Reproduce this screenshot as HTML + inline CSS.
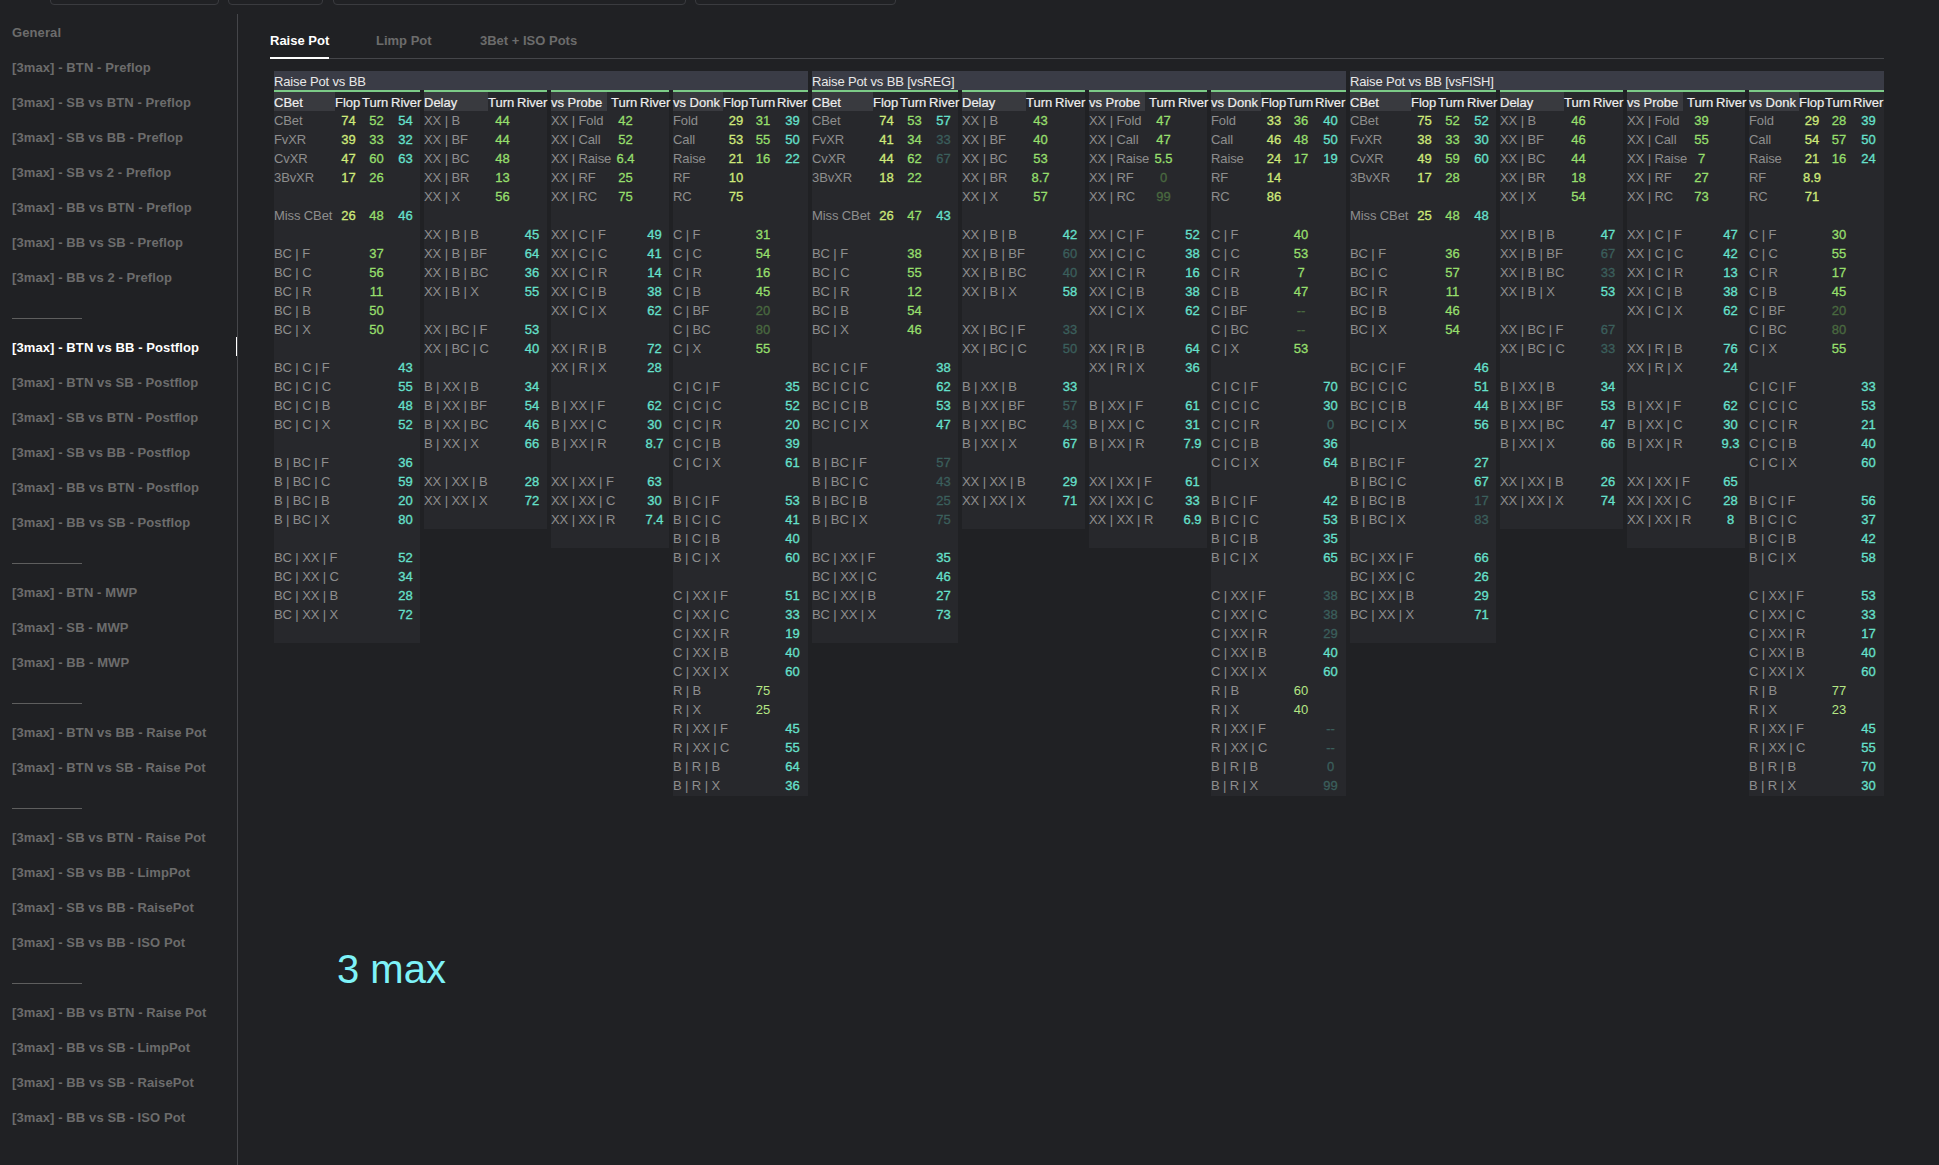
<!DOCTYPE html>
<html><head><meta charset="utf-8"><style>
html,body{margin:0;padding:0;background:#202124;width:1939px;height:1165px;overflow:hidden;}
body{position:relative;font-family:"Liberation Sans",sans-serif;}
.b{position:absolute;}
.x{position:absolute;white-space:nowrap;height:19px;line-height:19px;font-size:13px;}
.ti{color:#e8e8e8;font-size:13px;letter-spacing:-0.15px;}
.hd{color:#eeeeee;font-weight:normal;font-size:13px;letter-spacing:0px;-webkit-text-stroke:0.2px currentColor;}
.ch{text-align:left;}
.lb{color:#8e8e8e;font-size:13px;letter-spacing:-0.1px;}
.n{text-align:center;font-size:13px;font-weight:normal;-webkit-text-stroke:0.3px currentColor;}
.cf{color:#cfe97a;} .cy{color:#b4e684;-webkit-text-stroke:0;} .ct{color:#96df6c;} .cr{color:#66e0cc;}
.df{color:#5a6a3a;} .dt{color:#4a6a40;} .dr{color:#3b5f5c;}
.sd{color:#6c6c6c;font-weight:bold;font-size:13px;letter-spacing:0.1px;}
.act{color:#ffffff;}
.tab{font-weight:bold;font-size:13px;color:#6c6c6c;}
.tab.on{color:#ffffff;}
</style></head><body>
<div class="b" style="left:50px;top:-20px;width:167px;height:23px;border:1px solid #3a3b3f;border-radius:4px"></div><div class="b" style="left:228px;top:-20px;width:93px;height:23px;border:1px solid #3a3b3f;border-radius:4px"></div><div class="b" style="left:333px;top:-20px;width:351px;height:23px;border:1px solid #3a3b3f;border-radius:4px"></div><div class="b" style="left:695px;top:-20px;width:199px;height:23px;border:1px solid #3a3b3f;border-radius:4px"></div>
<div class="x sd" style="left:12px;top:23px">General</div><div class="x sd" style="left:12px;top:58px">[3max] - BTN - Preflop</div><div class="x sd" style="left:12px;top:93px">[3max] - SB vs BTN - Preflop</div><div class="x sd" style="left:12px;top:128px">[3max] - SB vs BB - Preflop</div><div class="x sd" style="left:12px;top:163px">[3max] - SB vs 2 - Preflop</div><div class="x sd" style="left:12px;top:198px">[3max] - BB vs BTN - Preflop</div><div class="x sd" style="left:12px;top:233px">[3max] - BB vs SB - Preflop</div><div class="x sd" style="left:12px;top:268px">[3max] - BB vs 2 - Preflop</div><div class="b" style="left:12px;top:318px;width:70px;height:1px;background:#5e5e5e"></div><div class="x sd act" style="left:12px;top:338px">[3max] - BTN vs BB - Postflop</div><div class="x sd" style="left:12px;top:373px">[3max] - BTN vs SB - Postflop</div><div class="x sd" style="left:12px;top:408px">[3max] - SB vs BTN - Postflop</div><div class="x sd" style="left:12px;top:443px">[3max] - SB vs BB - Postflop</div><div class="x sd" style="left:12px;top:478px">[3max] - BB vs BTN - Postflop</div><div class="x sd" style="left:12px;top:513px">[3max] - BB vs SB - Postflop</div><div class="b" style="left:12px;top:563px;width:70px;height:1px;background:#5e5e5e"></div><div class="x sd" style="left:12px;top:583px">[3max] - BTN - MWP</div><div class="x sd" style="left:12px;top:618px">[3max] - SB - MWP</div><div class="x sd" style="left:12px;top:653px">[3max] - BB - MWP</div><div class="b" style="left:12px;top:703px;width:70px;height:1px;background:#5e5e5e"></div><div class="x sd" style="left:12px;top:723px">[3max] - BTN vs BB - Raise Pot</div><div class="x sd" style="left:12px;top:758px">[3max] - BTN vs SB - Raise Pot</div><div class="b" style="left:12px;top:808px;width:70px;height:1px;background:#5e5e5e"></div><div class="x sd" style="left:12px;top:828px">[3max] - SB vs BTN - Raise Pot</div><div class="x sd" style="left:12px;top:863px">[3max] - SB vs BB - LimpPot</div><div class="x sd" style="left:12px;top:898px">[3max] - SB vs BB - RaisePot</div><div class="x sd" style="left:12px;top:933px">[3max] - SB vs BB - ISO Pot</div><div class="b" style="left:12px;top:983px;width:70px;height:1px;background:#5e5e5e"></div><div class="x sd" style="left:12px;top:1003px">[3max] - BB vs BTN - Raise Pot</div><div class="x sd" style="left:12px;top:1038px">[3max] - BB vs SB - LimpPot</div><div class="x sd" style="left:12px;top:1073px">[3max] - BB vs SB - RaisePot</div><div class="x sd" style="left:12px;top:1108px">[3max] - BB vs SB - ISO Pot</div>
<div class="b" style="left:237px;top:14px;width:1px;height:1151px;background:#45464a"></div><div class="b" style="left:236px;top:337px;width:1px;height:19px;background:#ffffff"></div><div class="x" style="left:337px;top:949px;height:40px;line-height:40px;font-size:40px;color:#7ef2f8">3 max</div>
<div class="x tab on" style="left:270px;top:31px">Raise Pot</div><div class="x tab" style="left:376px;top:31px">Limp Pot</div><div class="x tab" style="left:480px;top:31px">3Bet + ISO Pots</div><div class="b" style="left:270px;top:58px;width:1614px;height:1px;background:#45464a"></div><div class="b" style="left:270px;top:57px;width:59px;height:2px;background:#ffffff"></div>
<div class="b" style="left:274px;top:71px;width:534px;height:19px;background:#3a3c46;"></div><div class="x ti" style="left:274px;top:72px;">Raise Pot vs BB</div><div class="b" style="left:274px;top:92px;width:146px;height:551px;background:#27282c;"></div><div class="b" style="left:274px;top:90px;width:146px;height:2px;background:#7ccb87;"></div><div class="b" style="left:274px;top:92px;width:61px;height:19px;background:#393a3f;"></div><div class="x hd" style="left:274px;top:93px;">CBet</div><div class="x hd ch" style="left:335px;top:93px;width:27px;">Flop</div><div class="x hd ch" style="left:362px;top:93px;width:29px;">Turn</div><div class="x hd ch" style="left:391px;top:93px;width:29px;">River</div><div class="x lb" style="left:274px;top:111.25px;">CBet</div><div class="x n cf" style="left:335px;top:111.25px;width:27px;">74</div><div class="x n ct" style="left:362px;top:111.25px;width:29px;">52</div><div class="x n cr" style="left:391px;top:111.25px;width:29px;">54</div><div class="x lb" style="left:274px;top:130.25px;">FvXR</div><div class="x n cf" style="left:335px;top:130.25px;width:27px;">39</div><div class="x n ct" style="left:362px;top:130.25px;width:29px;">33</div><div class="x n cr" style="left:391px;top:130.25px;width:29px;">32</div><div class="x lb" style="left:274px;top:149.25px;">CvXR</div><div class="x n cf" style="left:335px;top:149.25px;width:27px;">47</div><div class="x n ct" style="left:362px;top:149.25px;width:29px;">60</div><div class="x n cr" style="left:391px;top:149.25px;width:29px;">63</div><div class="x lb" style="left:274px;top:168.25px;">3BvXR</div><div class="x n cf" style="left:335px;top:168.25px;width:27px;">17</div><div class="x n ct" style="left:362px;top:168.25px;width:29px;">26</div><div class="x lb" style="left:274px;top:206.25px;">Miss CBet</div><div class="x n cf" style="left:335px;top:206.25px;width:27px;">26</div><div class="x n ct" style="left:362px;top:206.25px;width:29px;">48</div><div class="x n cr" style="left:391px;top:206.25px;width:29px;">46</div><div class="x lb" style="left:274px;top:244.25px;">BC | F</div><div class="x n ct" style="left:362px;top:244.25px;width:29px;">37</div><div class="x lb" style="left:274px;top:263.25px;">BC | C</div><div class="x n ct" style="left:362px;top:263.25px;width:29px;">56</div><div class="x lb" style="left:274px;top:282.25px;">BC | R</div><div class="x n ct" style="left:362px;top:282.25px;width:29px;">11</div><div class="x lb" style="left:274px;top:301.25px;">BC | B</div><div class="x n ct" style="left:362px;top:301.25px;width:29px;">50</div><div class="x lb" style="left:274px;top:320.25px;">BC | X</div><div class="x n ct" style="left:362px;top:320.25px;width:29px;">50</div><div class="x lb" style="left:274px;top:358.25px;">BC | C | F</div><div class="x n cr" style="left:391px;top:358.25px;width:29px;">43</div><div class="x lb" style="left:274px;top:377.25px;">BC | C | C</div><div class="x n cr" style="left:391px;top:377.25px;width:29px;">55</div><div class="x lb" style="left:274px;top:396.25px;">BC | C | B</div><div class="x n cr" style="left:391px;top:396.25px;width:29px;">48</div><div class="x lb" style="left:274px;top:415.25px;">BC | C | X</div><div class="x n cr" style="left:391px;top:415.25px;width:29px;">52</div><div class="x lb" style="left:274px;top:453.25px;">B | BC | F</div><div class="x n cr" style="left:391px;top:453.25px;width:29px;">36</div><div class="x lb" style="left:274px;top:472.25px;">B | BC | C</div><div class="x n cr" style="left:391px;top:472.25px;width:29px;">59</div><div class="x lb" style="left:274px;top:491.25px;">B | BC | B</div><div class="x n cr" style="left:391px;top:491.25px;width:29px;">20</div><div class="x lb" style="left:274px;top:510.25px;">B | BC | X</div><div class="x n cr" style="left:391px;top:510.25px;width:29px;">80</div><div class="x lb" style="left:274px;top:548.25px;">BC | XX | F</div><div class="x n cr" style="left:391px;top:548.25px;width:29px;">52</div><div class="x lb" style="left:274px;top:567.25px;">BC | XX | C</div><div class="x n cr" style="left:391px;top:567.25px;width:29px;">34</div><div class="x lb" style="left:274px;top:586.25px;">BC | XX | B</div><div class="x n cr" style="left:391px;top:586.25px;width:29px;">28</div><div class="x lb" style="left:274px;top:605.25px;">BC | XX | X</div><div class="x n cr" style="left:391px;top:605.25px;width:29px;">72</div><div class="b" style="left:424px;top:92px;width:123px;height:437px;background:#27282c;"></div><div class="b" style="left:424px;top:90px;width:123px;height:2px;background:#7ccb87;"></div><div class="b" style="left:424px;top:92px;width:64px;height:19px;background:#393a3f;"></div><div class="x hd" style="left:424px;top:93px;">Delay</div><div class="x hd ch" style="left:488px;top:93px;width:29px;">Turn</div><div class="x hd ch" style="left:517px;top:93px;width:30px;">River</div><div class="x lb" style="left:424px;top:111.25px;">XX | B</div><div class="x n ct" style="left:488px;top:111.25px;width:29px;">44</div><div class="x lb" style="left:424px;top:130.25px;">XX | BF</div><div class="x n ct" style="left:488px;top:130.25px;width:29px;">44</div><div class="x lb" style="left:424px;top:149.25px;">XX | BC</div><div class="x n ct" style="left:488px;top:149.25px;width:29px;">48</div><div class="x lb" style="left:424px;top:168.25px;">XX | BR</div><div class="x n ct" style="left:488px;top:168.25px;width:29px;">13</div><div class="x lb" style="left:424px;top:187.25px;">XX | X</div><div class="x n ct" style="left:488px;top:187.25px;width:29px;">56</div><div class="x lb" style="left:424px;top:225.25px;">XX | B | B</div><div class="x n cr" style="left:517px;top:225.25px;width:30px;">45</div><div class="x lb" style="left:424px;top:244.25px;">XX | B | BF</div><div class="x n cr" style="left:517px;top:244.25px;width:30px;">64</div><div class="x lb" style="left:424px;top:263.25px;">XX | B | BC</div><div class="x n cr" style="left:517px;top:263.25px;width:30px;">36</div><div class="x lb" style="left:424px;top:282.25px;">XX | B | X</div><div class="x n cr" style="left:517px;top:282.25px;width:30px;">55</div><div class="x lb" style="left:424px;top:320.25px;">XX | BC | F</div><div class="x n cr" style="left:517px;top:320.25px;width:30px;">53</div><div class="x lb" style="left:424px;top:339.25px;">XX | BC | C</div><div class="x n cr" style="left:517px;top:339.25px;width:30px;">40</div><div class="x lb" style="left:424px;top:377.25px;">B | XX | B</div><div class="x n cr" style="left:517px;top:377.25px;width:30px;">34</div><div class="x lb" style="left:424px;top:396.25px;">B | XX | BF</div><div class="x n cr" style="left:517px;top:396.25px;width:30px;">54</div><div class="x lb" style="left:424px;top:415.25px;">B | XX | BC</div><div class="x n cr" style="left:517px;top:415.25px;width:30px;">46</div><div class="x lb" style="left:424px;top:434.25px;">B | XX | X</div><div class="x n cr" style="left:517px;top:434.25px;width:30px;">66</div><div class="x lb" style="left:424px;top:472.25px;">XX | XX | B</div><div class="x n cr" style="left:517px;top:472.25px;width:30px;">28</div><div class="x lb" style="left:424px;top:491.25px;">XX | XX | X</div><div class="x n cr" style="left:517px;top:491.25px;width:30px;">72</div><div class="b" style="left:551px;top:92px;width:118px;height:456px;background:#27282c;"></div><div class="b" style="left:551px;top:90px;width:118px;height:2px;background:#7ccb87;"></div><div class="b" style="left:551px;top:92px;width:56px;height:19px;background:#393a3f;"></div><div class="x hd" style="left:551px;top:93px;">vs Probe</div><div class="x hd ch" style="left:611px;top:93px;width:29px;">Turn</div><div class="x hd ch" style="left:640px;top:93px;width:29px;">River</div><div class="x lb" style="left:551px;top:111.25px;">XX | Fold</div><div class="x n ct" style="left:611px;top:111.25px;width:29px;">42</div><div class="x lb" style="left:551px;top:130.25px;">XX | Call</div><div class="x n ct" style="left:611px;top:130.25px;width:29px;">52</div><div class="x lb" style="left:551px;top:149.25px;">XX | Raise</div><div class="x n ct" style="left:611px;top:149.25px;width:29px;">6.4</div><div class="x lb" style="left:551px;top:168.25px;">XX | RF</div><div class="x n ct" style="left:611px;top:168.25px;width:29px;">25</div><div class="x lb" style="left:551px;top:187.25px;">XX | RC</div><div class="x n ct" style="left:611px;top:187.25px;width:29px;">75</div><div class="x lb" style="left:551px;top:225.25px;">XX | C | F</div><div class="x n cr" style="left:640px;top:225.25px;width:29px;">49</div><div class="x lb" style="left:551px;top:244.25px;">XX | C | C</div><div class="x n cr" style="left:640px;top:244.25px;width:29px;">41</div><div class="x lb" style="left:551px;top:263.25px;">XX | C | R</div><div class="x n cr" style="left:640px;top:263.25px;width:29px;">14</div><div class="x lb" style="left:551px;top:282.25px;">XX | C | B</div><div class="x n cr" style="left:640px;top:282.25px;width:29px;">38</div><div class="x lb" style="left:551px;top:301.25px;">XX | C | X</div><div class="x n cr" style="left:640px;top:301.25px;width:29px;">62</div><div class="x lb" style="left:551px;top:339.25px;">XX | R | B</div><div class="x n cr" style="left:640px;top:339.25px;width:29px;">72</div><div class="x lb" style="left:551px;top:358.25px;">XX | R | X</div><div class="x n cr" style="left:640px;top:358.25px;width:29px;">28</div><div class="x lb" style="left:551px;top:396.25px;">B | XX | F</div><div class="x n cr" style="left:640px;top:396.25px;width:29px;">62</div><div class="x lb" style="left:551px;top:415.25px;">B | XX | C</div><div class="x n cr" style="left:640px;top:415.25px;width:29px;">30</div><div class="x lb" style="left:551px;top:434.25px;">B | XX | R</div><div class="x n cr" style="left:640px;top:434.25px;width:29px;">8.7</div><div class="x lb" style="left:551px;top:472.25px;">XX | XX | F</div><div class="x n cr" style="left:640px;top:472.25px;width:29px;">63</div><div class="x lb" style="left:551px;top:491.25px;">XX | XX | C</div><div class="x n cr" style="left:640px;top:491.25px;width:29px;">30</div><div class="x lb" style="left:551px;top:510.25px;">XX | XX | R</div><div class="x n cr" style="left:640px;top:510.25px;width:29px;">7.4</div><div class="b" style="left:673px;top:92px;width:135px;height:704px;background:#27282c;"></div><div class="b" style="left:673px;top:90px;width:135px;height:2px;background:#7ccb87;"></div><div class="b" style="left:673px;top:92px;width:50px;height:19px;background:#393a3f;"></div><div class="x hd" style="left:673px;top:93px;">vs Donk</div><div class="x hd ch" style="left:723px;top:93px;width:26px;">Flop</div><div class="x hd ch" style="left:749px;top:93px;width:28px;">Turn</div><div class="x hd ch" style="left:777px;top:93px;width:31px;">River</div><div class="x lb" style="left:673px;top:111.25px;">Fold</div><div class="x n cf" style="left:723px;top:111.25px;width:26px;">29</div><div class="x n ct" style="left:749px;top:111.25px;width:28px;">31</div><div class="x n cr" style="left:777px;top:111.25px;width:31px;">39</div><div class="x lb" style="left:673px;top:130.25px;">Call</div><div class="x n cf" style="left:723px;top:130.25px;width:26px;">53</div><div class="x n ct" style="left:749px;top:130.25px;width:28px;">55</div><div class="x n cr" style="left:777px;top:130.25px;width:31px;">50</div><div class="x lb" style="left:673px;top:149.25px;">Raise</div><div class="x n cf" style="left:723px;top:149.25px;width:26px;">21</div><div class="x n ct" style="left:749px;top:149.25px;width:28px;">16</div><div class="x n cr" style="left:777px;top:149.25px;width:31px;">22</div><div class="x lb" style="left:673px;top:168.25px;">RF</div><div class="x n cf" style="left:723px;top:168.25px;width:26px;">10</div><div class="x lb" style="left:673px;top:187.25px;">RC</div><div class="x n cf" style="left:723px;top:187.25px;width:26px;">75</div><div class="x lb" style="left:673px;top:225.25px;">C | F</div><div class="x n ct" style="left:749px;top:225.25px;width:28px;">31</div><div class="x lb" style="left:673px;top:244.25px;">C | C</div><div class="x n ct" style="left:749px;top:244.25px;width:28px;">54</div><div class="x lb" style="left:673px;top:263.25px;">C | R</div><div class="x n ct" style="left:749px;top:263.25px;width:28px;">16</div><div class="x lb" style="left:673px;top:282.25px;">C | B</div><div class="x n ct" style="left:749px;top:282.25px;width:28px;">45</div><div class="x lb" style="left:673px;top:301.25px;">C | BF</div><div class="x n dt" style="left:749px;top:301.25px;width:28px;">20</div><div class="x lb" style="left:673px;top:320.25px;">C | BC</div><div class="x n dt" style="left:749px;top:320.25px;width:28px;">80</div><div class="x lb" style="left:673px;top:339.25px;">C | X</div><div class="x n ct" style="left:749px;top:339.25px;width:28px;">55</div><div class="x lb" style="left:673px;top:377.25px;">C | C | F</div><div class="x n cr" style="left:777px;top:377.25px;width:31px;">35</div><div class="x lb" style="left:673px;top:396.25px;">C | C | C</div><div class="x n cr" style="left:777px;top:396.25px;width:31px;">52</div><div class="x lb" style="left:673px;top:415.25px;">C | C | R</div><div class="x n cr" style="left:777px;top:415.25px;width:31px;">20</div><div class="x lb" style="left:673px;top:434.25px;">C | C | B</div><div class="x n cr" style="left:777px;top:434.25px;width:31px;">39</div><div class="x lb" style="left:673px;top:453.25px;">C | C | X</div><div class="x n cr" style="left:777px;top:453.25px;width:31px;">61</div><div class="x lb" style="left:673px;top:491.25px;">B | C | F</div><div class="x n cr" style="left:777px;top:491.25px;width:31px;">53</div><div class="x lb" style="left:673px;top:510.25px;">B | C | C</div><div class="x n cr" style="left:777px;top:510.25px;width:31px;">41</div><div class="x lb" style="left:673px;top:529.25px;">B | C | B</div><div class="x n cr" style="left:777px;top:529.25px;width:31px;">40</div><div class="x lb" style="left:673px;top:548.25px;">B | C | X</div><div class="x n cr" style="left:777px;top:548.25px;width:31px;">60</div><div class="x lb" style="left:673px;top:586.25px;">C | XX | F</div><div class="x n cr" style="left:777px;top:586.25px;width:31px;">51</div><div class="x lb" style="left:673px;top:605.25px;">C | XX | C</div><div class="x n cr" style="left:777px;top:605.25px;width:31px;">33</div><div class="x lb" style="left:673px;top:624.25px;">C | XX | R</div><div class="x n cr" style="left:777px;top:624.25px;width:31px;">19</div><div class="x lb" style="left:673px;top:643.25px;">C | XX | B</div><div class="x n cr" style="left:777px;top:643.25px;width:31px;">40</div><div class="x lb" style="left:673px;top:662.25px;">C | XX | X</div><div class="x n cr" style="left:777px;top:662.25px;width:31px;">60</div><div class="x lb" style="left:673px;top:681.25px;">R | B</div><div class="x n cy" style="left:749px;top:681.25px;width:28px;">75</div><div class="x lb" style="left:673px;top:700.25px;">R | X</div><div class="x n cy" style="left:749px;top:700.25px;width:28px;">25</div><div class="x lb" style="left:673px;top:719.25px;">R | XX | F</div><div class="x n cr" style="left:777px;top:719.25px;width:31px;">45</div><div class="x lb" style="left:673px;top:738.25px;">R | XX | C</div><div class="x n cr" style="left:777px;top:738.25px;width:31px;">55</div><div class="x lb" style="left:673px;top:757.25px;">B | R | B</div><div class="x n cr" style="left:777px;top:757.25px;width:31px;">64</div><div class="x lb" style="left:673px;top:776.25px;">B | R | X</div><div class="x n cr" style="left:777px;top:776.25px;width:31px;">36</div><div class="b" style="left:812px;top:71px;width:534px;height:19px;background:#3a3c46;"></div><div class="x ti" style="left:812px;top:72px;">Raise Pot vs BB [vsREG]</div><div class="b" style="left:812px;top:92px;width:146px;height:551px;background:#27282c;"></div><div class="b" style="left:812px;top:90px;width:146px;height:2px;background:#7ccb87;"></div><div class="b" style="left:812px;top:92px;width:61px;height:19px;background:#393a3f;"></div><div class="x hd" style="left:812px;top:93px;">CBet</div><div class="x hd ch" style="left:873px;top:93px;width:27px;">Flop</div><div class="x hd ch" style="left:900px;top:93px;width:29px;">Turn</div><div class="x hd ch" style="left:929px;top:93px;width:29px;">River</div><div class="x lb" style="left:812px;top:111.25px;">CBet</div><div class="x n cf" style="left:873px;top:111.25px;width:27px;">74</div><div class="x n ct" style="left:900px;top:111.25px;width:29px;">53</div><div class="x n cr" style="left:929px;top:111.25px;width:29px;">57</div><div class="x lb" style="left:812px;top:130.25px;">FvXR</div><div class="x n cf" style="left:873px;top:130.25px;width:27px;">41</div><div class="x n ct" style="left:900px;top:130.25px;width:29px;">34</div><div class="x n dr" style="left:929px;top:130.25px;width:29px;">33</div><div class="x lb" style="left:812px;top:149.25px;">CvXR</div><div class="x n cf" style="left:873px;top:149.25px;width:27px;">44</div><div class="x n ct" style="left:900px;top:149.25px;width:29px;">62</div><div class="x n dr" style="left:929px;top:149.25px;width:29px;">67</div><div class="x lb" style="left:812px;top:168.25px;">3BvXR</div><div class="x n cf" style="left:873px;top:168.25px;width:27px;">18</div><div class="x n ct" style="left:900px;top:168.25px;width:29px;">22</div><div class="x lb" style="left:812px;top:206.25px;">Miss CBet</div><div class="x n cf" style="left:873px;top:206.25px;width:27px;">26</div><div class="x n ct" style="left:900px;top:206.25px;width:29px;">47</div><div class="x n cr" style="left:929px;top:206.25px;width:29px;">43</div><div class="x lb" style="left:812px;top:244.25px;">BC | F</div><div class="x n ct" style="left:900px;top:244.25px;width:29px;">38</div><div class="x lb" style="left:812px;top:263.25px;">BC | C</div><div class="x n ct" style="left:900px;top:263.25px;width:29px;">55</div><div class="x lb" style="left:812px;top:282.25px;">BC | R</div><div class="x n ct" style="left:900px;top:282.25px;width:29px;">12</div><div class="x lb" style="left:812px;top:301.25px;">BC | B</div><div class="x n ct" style="left:900px;top:301.25px;width:29px;">54</div><div class="x lb" style="left:812px;top:320.25px;">BC | X</div><div class="x n ct" style="left:900px;top:320.25px;width:29px;">46</div><div class="x lb" style="left:812px;top:358.25px;">BC | C | F</div><div class="x n cr" style="left:929px;top:358.25px;width:29px;">38</div><div class="x lb" style="left:812px;top:377.25px;">BC | C | C</div><div class="x n cr" style="left:929px;top:377.25px;width:29px;">62</div><div class="x lb" style="left:812px;top:396.25px;">BC | C | B</div><div class="x n cr" style="left:929px;top:396.25px;width:29px;">53</div><div class="x lb" style="left:812px;top:415.25px;">BC | C | X</div><div class="x n cr" style="left:929px;top:415.25px;width:29px;">47</div><div class="x lb" style="left:812px;top:453.25px;">B | BC | F</div><div class="x n dr" style="left:929px;top:453.25px;width:29px;">57</div><div class="x lb" style="left:812px;top:472.25px;">B | BC | C</div><div class="x n dr" style="left:929px;top:472.25px;width:29px;">43</div><div class="x lb" style="left:812px;top:491.25px;">B | BC | B</div><div class="x n dr" style="left:929px;top:491.25px;width:29px;">25</div><div class="x lb" style="left:812px;top:510.25px;">B | BC | X</div><div class="x n dr" style="left:929px;top:510.25px;width:29px;">75</div><div class="x lb" style="left:812px;top:548.25px;">BC | XX | F</div><div class="x n cr" style="left:929px;top:548.25px;width:29px;">35</div><div class="x lb" style="left:812px;top:567.25px;">BC | XX | C</div><div class="x n cr" style="left:929px;top:567.25px;width:29px;">46</div><div class="x lb" style="left:812px;top:586.25px;">BC | XX | B</div><div class="x n cr" style="left:929px;top:586.25px;width:29px;">27</div><div class="x lb" style="left:812px;top:605.25px;">BC | XX | X</div><div class="x n cr" style="left:929px;top:605.25px;width:29px;">73</div><div class="b" style="left:962px;top:92px;width:123px;height:437px;background:#27282c;"></div><div class="b" style="left:962px;top:90px;width:123px;height:2px;background:#7ccb87;"></div><div class="b" style="left:962px;top:92px;width:64px;height:19px;background:#393a3f;"></div><div class="x hd" style="left:962px;top:93px;">Delay</div><div class="x hd ch" style="left:1026px;top:93px;width:29px;">Turn</div><div class="x hd ch" style="left:1055px;top:93px;width:30px;">River</div><div class="x lb" style="left:962px;top:111.25px;">XX | B</div><div class="x n ct" style="left:1026px;top:111.25px;width:29px;">43</div><div class="x lb" style="left:962px;top:130.25px;">XX | BF</div><div class="x n ct" style="left:1026px;top:130.25px;width:29px;">40</div><div class="x lb" style="left:962px;top:149.25px;">XX | BC</div><div class="x n ct" style="left:1026px;top:149.25px;width:29px;">53</div><div class="x lb" style="left:962px;top:168.25px;">XX | BR</div><div class="x n ct" style="left:1026px;top:168.25px;width:29px;">8.7</div><div class="x lb" style="left:962px;top:187.25px;">XX | X</div><div class="x n ct" style="left:1026px;top:187.25px;width:29px;">57</div><div class="x lb" style="left:962px;top:225.25px;">XX | B | B</div><div class="x n cr" style="left:1055px;top:225.25px;width:30px;">42</div><div class="x lb" style="left:962px;top:244.25px;">XX | B | BF</div><div class="x n dr" style="left:1055px;top:244.25px;width:30px;">60</div><div class="x lb" style="left:962px;top:263.25px;">XX | B | BC</div><div class="x n dr" style="left:1055px;top:263.25px;width:30px;">40</div><div class="x lb" style="left:962px;top:282.25px;">XX | B | X</div><div class="x n cr" style="left:1055px;top:282.25px;width:30px;">58</div><div class="x lb" style="left:962px;top:320.25px;">XX | BC | F</div><div class="x n dr" style="left:1055px;top:320.25px;width:30px;">33</div><div class="x lb" style="left:962px;top:339.25px;">XX | BC | C</div><div class="x n dr" style="left:1055px;top:339.25px;width:30px;">50</div><div class="x lb" style="left:962px;top:377.25px;">B | XX | B</div><div class="x n cr" style="left:1055px;top:377.25px;width:30px;">33</div><div class="x lb" style="left:962px;top:396.25px;">B | XX | BF</div><div class="x n dr" style="left:1055px;top:396.25px;width:30px;">57</div><div class="x lb" style="left:962px;top:415.25px;">B | XX | BC</div><div class="x n dr" style="left:1055px;top:415.25px;width:30px;">43</div><div class="x lb" style="left:962px;top:434.25px;">B | XX | X</div><div class="x n cr" style="left:1055px;top:434.25px;width:30px;">67</div><div class="x lb" style="left:962px;top:472.25px;">XX | XX | B</div><div class="x n cr" style="left:1055px;top:472.25px;width:30px;">29</div><div class="x lb" style="left:962px;top:491.25px;">XX | XX | X</div><div class="x n cr" style="left:1055px;top:491.25px;width:30px;">71</div><div class="b" style="left:1089px;top:92px;width:118px;height:456px;background:#27282c;"></div><div class="b" style="left:1089px;top:90px;width:118px;height:2px;background:#7ccb87;"></div><div class="b" style="left:1089px;top:92px;width:56px;height:19px;background:#393a3f;"></div><div class="x hd" style="left:1089px;top:93px;">vs Probe</div><div class="x hd ch" style="left:1149px;top:93px;width:29px;">Turn</div><div class="x hd ch" style="left:1178px;top:93px;width:29px;">River</div><div class="x lb" style="left:1089px;top:111.25px;">XX | Fold</div><div class="x n ct" style="left:1149px;top:111.25px;width:29px;">47</div><div class="x lb" style="left:1089px;top:130.25px;">XX | Call</div><div class="x n ct" style="left:1149px;top:130.25px;width:29px;">47</div><div class="x lb" style="left:1089px;top:149.25px;">XX | Raise</div><div class="x n ct" style="left:1149px;top:149.25px;width:29px;">5.5</div><div class="x lb" style="left:1089px;top:168.25px;">XX | RF</div><div class="x n dt" style="left:1149px;top:168.25px;width:29px;">0</div><div class="x lb" style="left:1089px;top:187.25px;">XX | RC</div><div class="x n dt" style="left:1149px;top:187.25px;width:29px;">99</div><div class="x lb" style="left:1089px;top:225.25px;">XX | C | F</div><div class="x n cr" style="left:1178px;top:225.25px;width:29px;">52</div><div class="x lb" style="left:1089px;top:244.25px;">XX | C | C</div><div class="x n cr" style="left:1178px;top:244.25px;width:29px;">38</div><div class="x lb" style="left:1089px;top:263.25px;">XX | C | R</div><div class="x n cr" style="left:1178px;top:263.25px;width:29px;">16</div><div class="x lb" style="left:1089px;top:282.25px;">XX | C | B</div><div class="x n cr" style="left:1178px;top:282.25px;width:29px;">38</div><div class="x lb" style="left:1089px;top:301.25px;">XX | C | X</div><div class="x n cr" style="left:1178px;top:301.25px;width:29px;">62</div><div class="x lb" style="left:1089px;top:339.25px;">XX | R | B</div><div class="x n cr" style="left:1178px;top:339.25px;width:29px;">64</div><div class="x lb" style="left:1089px;top:358.25px;">XX | R | X</div><div class="x n cr" style="left:1178px;top:358.25px;width:29px;">36</div><div class="x lb" style="left:1089px;top:396.25px;">B | XX | F</div><div class="x n cr" style="left:1178px;top:396.25px;width:29px;">61</div><div class="x lb" style="left:1089px;top:415.25px;">B | XX | C</div><div class="x n cr" style="left:1178px;top:415.25px;width:29px;">31</div><div class="x lb" style="left:1089px;top:434.25px;">B | XX | R</div><div class="x n cr" style="left:1178px;top:434.25px;width:29px;">7.9</div><div class="x lb" style="left:1089px;top:472.25px;">XX | XX | F</div><div class="x n cr" style="left:1178px;top:472.25px;width:29px;">61</div><div class="x lb" style="left:1089px;top:491.25px;">XX | XX | C</div><div class="x n cr" style="left:1178px;top:491.25px;width:29px;">33</div><div class="x lb" style="left:1089px;top:510.25px;">XX | XX | R</div><div class="x n cr" style="left:1178px;top:510.25px;width:29px;">6.9</div><div class="b" style="left:1211px;top:92px;width:135px;height:704px;background:#27282c;"></div><div class="b" style="left:1211px;top:90px;width:135px;height:2px;background:#7ccb87;"></div><div class="b" style="left:1211px;top:92px;width:50px;height:19px;background:#393a3f;"></div><div class="x hd" style="left:1211px;top:93px;">vs Donk</div><div class="x hd ch" style="left:1261px;top:93px;width:26px;">Flop</div><div class="x hd ch" style="left:1287px;top:93px;width:28px;">Turn</div><div class="x hd ch" style="left:1315px;top:93px;width:31px;">River</div><div class="x lb" style="left:1211px;top:111.25px;">Fold</div><div class="x n cf" style="left:1261px;top:111.25px;width:26px;">33</div><div class="x n ct" style="left:1287px;top:111.25px;width:28px;">36</div><div class="x n cr" style="left:1315px;top:111.25px;width:31px;">40</div><div class="x lb" style="left:1211px;top:130.25px;">Call</div><div class="x n cf" style="left:1261px;top:130.25px;width:26px;">46</div><div class="x n ct" style="left:1287px;top:130.25px;width:28px;">48</div><div class="x n cr" style="left:1315px;top:130.25px;width:31px;">50</div><div class="x lb" style="left:1211px;top:149.25px;">Raise</div><div class="x n cf" style="left:1261px;top:149.25px;width:26px;">24</div><div class="x n ct" style="left:1287px;top:149.25px;width:28px;">17</div><div class="x n cr" style="left:1315px;top:149.25px;width:31px;">19</div><div class="x lb" style="left:1211px;top:168.25px;">RF</div><div class="x n cf" style="left:1261px;top:168.25px;width:26px;">14</div><div class="x lb" style="left:1211px;top:187.25px;">RC</div><div class="x n cf" style="left:1261px;top:187.25px;width:26px;">86</div><div class="x lb" style="left:1211px;top:225.25px;">C | F</div><div class="x n ct" style="left:1287px;top:225.25px;width:28px;">40</div><div class="x lb" style="left:1211px;top:244.25px;">C | C</div><div class="x n ct" style="left:1287px;top:244.25px;width:28px;">53</div><div class="x lb" style="left:1211px;top:263.25px;">C | R</div><div class="x n ct" style="left:1287px;top:263.25px;width:28px;">7</div><div class="x lb" style="left:1211px;top:282.25px;">C | B</div><div class="x n ct" style="left:1287px;top:282.25px;width:28px;">47</div><div class="x lb" style="left:1211px;top:301.25px;">C | BF</div><div class="x n dt" style="left:1287px;top:301.25px;width:28px;">--</div><div class="x lb" style="left:1211px;top:320.25px;">C | BC</div><div class="x n dt" style="left:1287px;top:320.25px;width:28px;">--</div><div class="x lb" style="left:1211px;top:339.25px;">C | X</div><div class="x n ct" style="left:1287px;top:339.25px;width:28px;">53</div><div class="x lb" style="left:1211px;top:377.25px;">C | C | F</div><div class="x n cr" style="left:1315px;top:377.25px;width:31px;">70</div><div class="x lb" style="left:1211px;top:396.25px;">C | C | C</div><div class="x n cr" style="left:1315px;top:396.25px;width:31px;">30</div><div class="x lb" style="left:1211px;top:415.25px;">C | C | R</div><div class="x n dr" style="left:1315px;top:415.25px;width:31px;">0</div><div class="x lb" style="left:1211px;top:434.25px;">C | C | B</div><div class="x n cr" style="left:1315px;top:434.25px;width:31px;">36</div><div class="x lb" style="left:1211px;top:453.25px;">C | C | X</div><div class="x n cr" style="left:1315px;top:453.25px;width:31px;">64</div><div class="x lb" style="left:1211px;top:491.25px;">B | C | F</div><div class="x n cr" style="left:1315px;top:491.25px;width:31px;">42</div><div class="x lb" style="left:1211px;top:510.25px;">B | C | C</div><div class="x n cr" style="left:1315px;top:510.25px;width:31px;">53</div><div class="x lb" style="left:1211px;top:529.25px;">B | C | B</div><div class="x n cr" style="left:1315px;top:529.25px;width:31px;">35</div><div class="x lb" style="left:1211px;top:548.25px;">B | C | X</div><div class="x n cr" style="left:1315px;top:548.25px;width:31px;">65</div><div class="x lb" style="left:1211px;top:586.25px;">C | XX | F</div><div class="x n dr" style="left:1315px;top:586.25px;width:31px;">38</div><div class="x lb" style="left:1211px;top:605.25px;">C | XX | C</div><div class="x n dr" style="left:1315px;top:605.25px;width:31px;">38</div><div class="x lb" style="left:1211px;top:624.25px;">C | XX | R</div><div class="x n dr" style="left:1315px;top:624.25px;width:31px;">29</div><div class="x lb" style="left:1211px;top:643.25px;">C | XX | B</div><div class="x n cr" style="left:1315px;top:643.25px;width:31px;">40</div><div class="x lb" style="left:1211px;top:662.25px;">C | XX | X</div><div class="x n cr" style="left:1315px;top:662.25px;width:31px;">60</div><div class="x lb" style="left:1211px;top:681.25px;">R | B</div><div class="x n cy" style="left:1287px;top:681.25px;width:28px;">60</div><div class="x lb" style="left:1211px;top:700.25px;">R | X</div><div class="x n cy" style="left:1287px;top:700.25px;width:28px;">40</div><div class="x lb" style="left:1211px;top:719.25px;">R | XX | F</div><div class="x n dr" style="left:1315px;top:719.25px;width:31px;">--</div><div class="x lb" style="left:1211px;top:738.25px;">R | XX | C</div><div class="x n dr" style="left:1315px;top:738.25px;width:31px;">--</div><div class="x lb" style="left:1211px;top:757.25px;">B | R | B</div><div class="x n dr" style="left:1315px;top:757.25px;width:31px;">0</div><div class="x lb" style="left:1211px;top:776.25px;">B | R | X</div><div class="x n dr" style="left:1315px;top:776.25px;width:31px;">99</div><div class="b" style="left:1350px;top:71px;width:534px;height:19px;background:#3a3c46;"></div><div class="x ti" style="left:1350px;top:72px;">Raise Pot vs BB [vsFISH]</div><div class="b" style="left:1350px;top:92px;width:146px;height:551px;background:#27282c;"></div><div class="b" style="left:1350px;top:90px;width:146px;height:2px;background:#7ccb87;"></div><div class="b" style="left:1350px;top:92px;width:61px;height:19px;background:#393a3f;"></div><div class="x hd" style="left:1350px;top:93px;">CBet</div><div class="x hd ch" style="left:1411px;top:93px;width:27px;">Flop</div><div class="x hd ch" style="left:1438px;top:93px;width:29px;">Turn</div><div class="x hd ch" style="left:1467px;top:93px;width:29px;">River</div><div class="x lb" style="left:1350px;top:111.25px;">CBet</div><div class="x n cf" style="left:1411px;top:111.25px;width:27px;">75</div><div class="x n ct" style="left:1438px;top:111.25px;width:29px;">52</div><div class="x n cr" style="left:1467px;top:111.25px;width:29px;">52</div><div class="x lb" style="left:1350px;top:130.25px;">FvXR</div><div class="x n cf" style="left:1411px;top:130.25px;width:27px;">38</div><div class="x n ct" style="left:1438px;top:130.25px;width:29px;">33</div><div class="x n cr" style="left:1467px;top:130.25px;width:29px;">30</div><div class="x lb" style="left:1350px;top:149.25px;">CvXR</div><div class="x n cf" style="left:1411px;top:149.25px;width:27px;">49</div><div class="x n ct" style="left:1438px;top:149.25px;width:29px;">59</div><div class="x n cr" style="left:1467px;top:149.25px;width:29px;">60</div><div class="x lb" style="left:1350px;top:168.25px;">3BvXR</div><div class="x n cf" style="left:1411px;top:168.25px;width:27px;">17</div><div class="x n ct" style="left:1438px;top:168.25px;width:29px;">28</div><div class="x lb" style="left:1350px;top:206.25px;">Miss CBet</div><div class="x n cf" style="left:1411px;top:206.25px;width:27px;">25</div><div class="x n ct" style="left:1438px;top:206.25px;width:29px;">48</div><div class="x n cr" style="left:1467px;top:206.25px;width:29px;">48</div><div class="x lb" style="left:1350px;top:244.25px;">BC | F</div><div class="x n ct" style="left:1438px;top:244.25px;width:29px;">36</div><div class="x lb" style="left:1350px;top:263.25px;">BC | C</div><div class="x n ct" style="left:1438px;top:263.25px;width:29px;">57</div><div class="x lb" style="left:1350px;top:282.25px;">BC | R</div><div class="x n ct" style="left:1438px;top:282.25px;width:29px;">11</div><div class="x lb" style="left:1350px;top:301.25px;">BC | B</div><div class="x n ct" style="left:1438px;top:301.25px;width:29px;">46</div><div class="x lb" style="left:1350px;top:320.25px;">BC | X</div><div class="x n ct" style="left:1438px;top:320.25px;width:29px;">54</div><div class="x lb" style="left:1350px;top:358.25px;">BC | C | F</div><div class="x n cr" style="left:1467px;top:358.25px;width:29px;">46</div><div class="x lb" style="left:1350px;top:377.25px;">BC | C | C</div><div class="x n cr" style="left:1467px;top:377.25px;width:29px;">51</div><div class="x lb" style="left:1350px;top:396.25px;">BC | C | B</div><div class="x n cr" style="left:1467px;top:396.25px;width:29px;">44</div><div class="x lb" style="left:1350px;top:415.25px;">BC | C | X</div><div class="x n cr" style="left:1467px;top:415.25px;width:29px;">56</div><div class="x lb" style="left:1350px;top:453.25px;">B | BC | F</div><div class="x n cr" style="left:1467px;top:453.25px;width:29px;">27</div><div class="x lb" style="left:1350px;top:472.25px;">B | BC | C</div><div class="x n cr" style="left:1467px;top:472.25px;width:29px;">67</div><div class="x lb" style="left:1350px;top:491.25px;">B | BC | B</div><div class="x n dr" style="left:1467px;top:491.25px;width:29px;">17</div><div class="x lb" style="left:1350px;top:510.25px;">B | BC | X</div><div class="x n dr" style="left:1467px;top:510.25px;width:29px;">83</div><div class="x lb" style="left:1350px;top:548.25px;">BC | XX | F</div><div class="x n cr" style="left:1467px;top:548.25px;width:29px;">66</div><div class="x lb" style="left:1350px;top:567.25px;">BC | XX | C</div><div class="x n cr" style="left:1467px;top:567.25px;width:29px;">26</div><div class="x lb" style="left:1350px;top:586.25px;">BC | XX | B</div><div class="x n cr" style="left:1467px;top:586.25px;width:29px;">29</div><div class="x lb" style="left:1350px;top:605.25px;">BC | XX | X</div><div class="x n cr" style="left:1467px;top:605.25px;width:29px;">71</div><div class="b" style="left:1500px;top:92px;width:123px;height:437px;background:#27282c;"></div><div class="b" style="left:1500px;top:90px;width:123px;height:2px;background:#7ccb87;"></div><div class="b" style="left:1500px;top:92px;width:64px;height:19px;background:#393a3f;"></div><div class="x hd" style="left:1500px;top:93px;">Delay</div><div class="x hd ch" style="left:1564px;top:93px;width:29px;">Turn</div><div class="x hd ch" style="left:1593px;top:93px;width:30px;">River</div><div class="x lb" style="left:1500px;top:111.25px;">XX | B</div><div class="x n ct" style="left:1564px;top:111.25px;width:29px;">46</div><div class="x lb" style="left:1500px;top:130.25px;">XX | BF</div><div class="x n ct" style="left:1564px;top:130.25px;width:29px;">46</div><div class="x lb" style="left:1500px;top:149.25px;">XX | BC</div><div class="x n ct" style="left:1564px;top:149.25px;width:29px;">44</div><div class="x lb" style="left:1500px;top:168.25px;">XX | BR</div><div class="x n ct" style="left:1564px;top:168.25px;width:29px;">18</div><div class="x lb" style="left:1500px;top:187.25px;">XX | X</div><div class="x n ct" style="left:1564px;top:187.25px;width:29px;">54</div><div class="x lb" style="left:1500px;top:225.25px;">XX | B | B</div><div class="x n cr" style="left:1593px;top:225.25px;width:30px;">47</div><div class="x lb" style="left:1500px;top:244.25px;">XX | B | BF</div><div class="x n dr" style="left:1593px;top:244.25px;width:30px;">67</div><div class="x lb" style="left:1500px;top:263.25px;">XX | B | BC</div><div class="x n dr" style="left:1593px;top:263.25px;width:30px;">33</div><div class="x lb" style="left:1500px;top:282.25px;">XX | B | X</div><div class="x n cr" style="left:1593px;top:282.25px;width:30px;">53</div><div class="x lb" style="left:1500px;top:320.25px;">XX | BC | F</div><div class="x n dr" style="left:1593px;top:320.25px;width:30px;">67</div><div class="x lb" style="left:1500px;top:339.25px;">XX | BC | C</div><div class="x n dr" style="left:1593px;top:339.25px;width:30px;">33</div><div class="x lb" style="left:1500px;top:377.25px;">B | XX | B</div><div class="x n cr" style="left:1593px;top:377.25px;width:30px;">34</div><div class="x lb" style="left:1500px;top:396.25px;">B | XX | BF</div><div class="x n cr" style="left:1593px;top:396.25px;width:30px;">53</div><div class="x lb" style="left:1500px;top:415.25px;">B | XX | BC</div><div class="x n cr" style="left:1593px;top:415.25px;width:30px;">47</div><div class="x lb" style="left:1500px;top:434.25px;">B | XX | X</div><div class="x n cr" style="left:1593px;top:434.25px;width:30px;">66</div><div class="x lb" style="left:1500px;top:472.25px;">XX | XX | B</div><div class="x n cr" style="left:1593px;top:472.25px;width:30px;">26</div><div class="x lb" style="left:1500px;top:491.25px;">XX | XX | X</div><div class="x n cr" style="left:1593px;top:491.25px;width:30px;">74</div><div class="b" style="left:1627px;top:92px;width:118px;height:456px;background:#27282c;"></div><div class="b" style="left:1627px;top:90px;width:118px;height:2px;background:#7ccb87;"></div><div class="b" style="left:1627px;top:92px;width:56px;height:19px;background:#393a3f;"></div><div class="x hd" style="left:1627px;top:93px;">vs Probe</div><div class="x hd ch" style="left:1687px;top:93px;width:29px;">Turn</div><div class="x hd ch" style="left:1716px;top:93px;width:29px;">River</div><div class="x lb" style="left:1627px;top:111.25px;">XX | Fold</div><div class="x n ct" style="left:1687px;top:111.25px;width:29px;">39</div><div class="x lb" style="left:1627px;top:130.25px;">XX | Call</div><div class="x n ct" style="left:1687px;top:130.25px;width:29px;">55</div><div class="x lb" style="left:1627px;top:149.25px;">XX | Raise</div><div class="x n ct" style="left:1687px;top:149.25px;width:29px;">7</div><div class="x lb" style="left:1627px;top:168.25px;">XX | RF</div><div class="x n ct" style="left:1687px;top:168.25px;width:29px;">27</div><div class="x lb" style="left:1627px;top:187.25px;">XX | RC</div><div class="x n ct" style="left:1687px;top:187.25px;width:29px;">73</div><div class="x lb" style="left:1627px;top:225.25px;">XX | C | F</div><div class="x n cr" style="left:1716px;top:225.25px;width:29px;">47</div><div class="x lb" style="left:1627px;top:244.25px;">XX | C | C</div><div class="x n cr" style="left:1716px;top:244.25px;width:29px;">42</div><div class="x lb" style="left:1627px;top:263.25px;">XX | C | R</div><div class="x n cr" style="left:1716px;top:263.25px;width:29px;">13</div><div class="x lb" style="left:1627px;top:282.25px;">XX | C | B</div><div class="x n cr" style="left:1716px;top:282.25px;width:29px;">38</div><div class="x lb" style="left:1627px;top:301.25px;">XX | C | X</div><div class="x n cr" style="left:1716px;top:301.25px;width:29px;">62</div><div class="x lb" style="left:1627px;top:339.25px;">XX | R | B</div><div class="x n cr" style="left:1716px;top:339.25px;width:29px;">76</div><div class="x lb" style="left:1627px;top:358.25px;">XX | R | X</div><div class="x n cr" style="left:1716px;top:358.25px;width:29px;">24</div><div class="x lb" style="left:1627px;top:396.25px;">B | XX | F</div><div class="x n cr" style="left:1716px;top:396.25px;width:29px;">62</div><div class="x lb" style="left:1627px;top:415.25px;">B | XX | C</div><div class="x n cr" style="left:1716px;top:415.25px;width:29px;">30</div><div class="x lb" style="left:1627px;top:434.25px;">B | XX | R</div><div class="x n cr" style="left:1716px;top:434.25px;width:29px;">9.3</div><div class="x lb" style="left:1627px;top:472.25px;">XX | XX | F</div><div class="x n cr" style="left:1716px;top:472.25px;width:29px;">65</div><div class="x lb" style="left:1627px;top:491.25px;">XX | XX | C</div><div class="x n cr" style="left:1716px;top:491.25px;width:29px;">28</div><div class="x lb" style="left:1627px;top:510.25px;">XX | XX | R</div><div class="x n cr" style="left:1716px;top:510.25px;width:29px;">8</div><div class="b" style="left:1749px;top:92px;width:135px;height:704px;background:#27282c;"></div><div class="b" style="left:1749px;top:90px;width:135px;height:2px;background:#7ccb87;"></div><div class="b" style="left:1749px;top:92px;width:50px;height:19px;background:#393a3f;"></div><div class="x hd" style="left:1749px;top:93px;">vs Donk</div><div class="x hd ch" style="left:1799px;top:93px;width:26px;">Flop</div><div class="x hd ch" style="left:1825px;top:93px;width:28px;">Turn</div><div class="x hd ch" style="left:1853px;top:93px;width:31px;">River</div><div class="x lb" style="left:1749px;top:111.25px;">Fold</div><div class="x n cf" style="left:1799px;top:111.25px;width:26px;">29</div><div class="x n ct" style="left:1825px;top:111.25px;width:28px;">28</div><div class="x n cr" style="left:1853px;top:111.25px;width:31px;">39</div><div class="x lb" style="left:1749px;top:130.25px;">Call</div><div class="x n cf" style="left:1799px;top:130.25px;width:26px;">54</div><div class="x n ct" style="left:1825px;top:130.25px;width:28px;">57</div><div class="x n cr" style="left:1853px;top:130.25px;width:31px;">50</div><div class="x lb" style="left:1749px;top:149.25px;">Raise</div><div class="x n cf" style="left:1799px;top:149.25px;width:26px;">21</div><div class="x n ct" style="left:1825px;top:149.25px;width:28px;">16</div><div class="x n cr" style="left:1853px;top:149.25px;width:31px;">24</div><div class="x lb" style="left:1749px;top:168.25px;">RF</div><div class="x n cf" style="left:1799px;top:168.25px;width:26px;">8.9</div><div class="x lb" style="left:1749px;top:187.25px;">RC</div><div class="x n cf" style="left:1799px;top:187.25px;width:26px;">71</div><div class="x lb" style="left:1749px;top:225.25px;">C | F</div><div class="x n ct" style="left:1825px;top:225.25px;width:28px;">30</div><div class="x lb" style="left:1749px;top:244.25px;">C | C</div><div class="x n ct" style="left:1825px;top:244.25px;width:28px;">55</div><div class="x lb" style="left:1749px;top:263.25px;">C | R</div><div class="x n ct" style="left:1825px;top:263.25px;width:28px;">17</div><div class="x lb" style="left:1749px;top:282.25px;">C | B</div><div class="x n ct" style="left:1825px;top:282.25px;width:28px;">45</div><div class="x lb" style="left:1749px;top:301.25px;">C | BF</div><div class="x n dt" style="left:1825px;top:301.25px;width:28px;">20</div><div class="x lb" style="left:1749px;top:320.25px;">C | BC</div><div class="x n dt" style="left:1825px;top:320.25px;width:28px;">80</div><div class="x lb" style="left:1749px;top:339.25px;">C | X</div><div class="x n ct" style="left:1825px;top:339.25px;width:28px;">55</div><div class="x lb" style="left:1749px;top:377.25px;">C | C | F</div><div class="x n cr" style="left:1853px;top:377.25px;width:31px;">33</div><div class="x lb" style="left:1749px;top:396.25px;">C | C | C</div><div class="x n cr" style="left:1853px;top:396.25px;width:31px;">53</div><div class="x lb" style="left:1749px;top:415.25px;">C | C | R</div><div class="x n cr" style="left:1853px;top:415.25px;width:31px;">21</div><div class="x lb" style="left:1749px;top:434.25px;">C | C | B</div><div class="x n cr" style="left:1853px;top:434.25px;width:31px;">40</div><div class="x lb" style="left:1749px;top:453.25px;">C | C | X</div><div class="x n cr" style="left:1853px;top:453.25px;width:31px;">60</div><div class="x lb" style="left:1749px;top:491.25px;">B | C | F</div><div class="x n cr" style="left:1853px;top:491.25px;width:31px;">56</div><div class="x lb" style="left:1749px;top:510.25px;">B | C | C</div><div class="x n cr" style="left:1853px;top:510.25px;width:31px;">37</div><div class="x lb" style="left:1749px;top:529.25px;">B | C | B</div><div class="x n cr" style="left:1853px;top:529.25px;width:31px;">42</div><div class="x lb" style="left:1749px;top:548.25px;">B | C | X</div><div class="x n cr" style="left:1853px;top:548.25px;width:31px;">58</div><div class="x lb" style="left:1749px;top:586.25px;">C | XX | F</div><div class="x n cr" style="left:1853px;top:586.25px;width:31px;">53</div><div class="x lb" style="left:1749px;top:605.25px;">C | XX | C</div><div class="x n cr" style="left:1853px;top:605.25px;width:31px;">33</div><div class="x lb" style="left:1749px;top:624.25px;">C | XX | R</div><div class="x n cr" style="left:1853px;top:624.25px;width:31px;">17</div><div class="x lb" style="left:1749px;top:643.25px;">C | XX | B</div><div class="x n cr" style="left:1853px;top:643.25px;width:31px;">40</div><div class="x lb" style="left:1749px;top:662.25px;">C | XX | X</div><div class="x n cr" style="left:1853px;top:662.25px;width:31px;">60</div><div class="x lb" style="left:1749px;top:681.25px;">R | B</div><div class="x n cy" style="left:1825px;top:681.25px;width:28px;">77</div><div class="x lb" style="left:1749px;top:700.25px;">R | X</div><div class="x n cy" style="left:1825px;top:700.25px;width:28px;">23</div><div class="x lb" style="left:1749px;top:719.25px;">R | XX | F</div><div class="x n cr" style="left:1853px;top:719.25px;width:31px;">45</div><div class="x lb" style="left:1749px;top:738.25px;">R | XX | C</div><div class="x n cr" style="left:1853px;top:738.25px;width:31px;">55</div><div class="x lb" style="left:1749px;top:757.25px;">B | R | B</div><div class="x n cr" style="left:1853px;top:757.25px;width:31px;">70</div><div class="x lb" style="left:1749px;top:776.25px;">B | R | X</div><div class="x n cr" style="left:1853px;top:776.25px;width:31px;">30</div>
</body></html>
